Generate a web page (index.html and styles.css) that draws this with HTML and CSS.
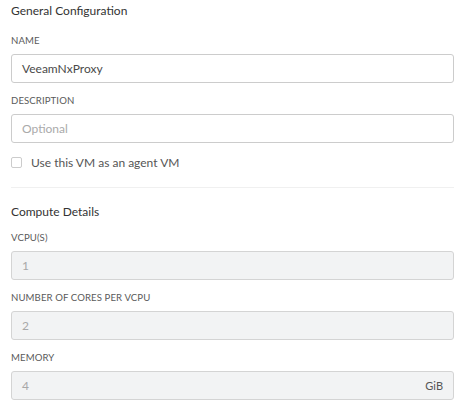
FILE: index.html
```html
<!DOCTYPE html>
<html>
<head>
<meta charset="utf-8">
<link rel="stylesheet" href="styles.css">
</head>
<body>
<div class="form">
  <section class="section">
    <h2 class="title">General Configuration</h2>
    <div class="field">
      <label class="label">NAME</label>
      <div class="input">VeeamNxProxy</div>
    </div>
    <div class="field">
      <label class="label">DESCRIPTION</label>
      <div class="input placeholder">Optional</div>
    </div>
    <div class="check">
      <span class="box"></span>
      <span class="check-text">Use this VM as an agent VM</span>
    </div>
  </section>
  <hr class="divider">
  <section class="section">
    <h2 class="title title-tight">Compute Details</h2>
    <div class="field">
      <label class="label">VCPU(S)</label>
      <div class="input disabled">1</div>
    </div>
    <div class="field">
      <label class="label">NUMBER OF CORES PER VCPU</label>
      <div class="input disabled">2</div>
    </div>
    <div class="field">
      <label class="label">MEMORY</label>
      <div class="input disabled"><span>4</span><span class="unit">GiB</span></div>
    </div>
  </section>
</div>
</body>
</html>
```
FILE: styles.css
```css
* { box-sizing: border-box; }
html, body { margin: 0; padding: 0; background: #fff; }
body { font-family: Lato, "Liberation Sans", sans-serif; color: #333; }
.form { padding: 3px 11px 0 11px; width: 465px; }
.section { display: flex; flex-direction: column; }
.title { margin: 0 0 4px 0; font-size: 12px; font-weight: 400; color: #333; line-height: 16px; }
.title-tight { margin-bottom: 0; }
.field { display: flex; flex-direction: column; }
.label { font-size: 9.6px; color: #5a5a5a; line-height: 11px; margin-top: 12px; margin-bottom: 8px; letter-spacing: 0.1px; }
.input { height: 29px; width: 443px; border: 1px solid #ccc; border-radius: 3px; padding: 0 10px; display: flex; align-items: center; justify-content: space-between; font-size: 12px; color: #4a4a4a; }
.placeholder { color: #aaa; }
.disabled { background: #f2f3f4; color: #a8a8a8; border-color: #d4d4d4; }
.unit { color: #555; font-size: 11px; }
.check { display: flex; align-items: center; gap: 9px; margin-top: 12px; height: 14px; }
.box { width: 11px; height: 11px; border: 1px solid #ccc; border-radius: 2px; }
.check-text { font-size: 12px; color: #555; }
.divider { border: 0; border-top: 1px solid #f0f0f0; margin: 18px 0 16px 0; width: 443px; }
```
